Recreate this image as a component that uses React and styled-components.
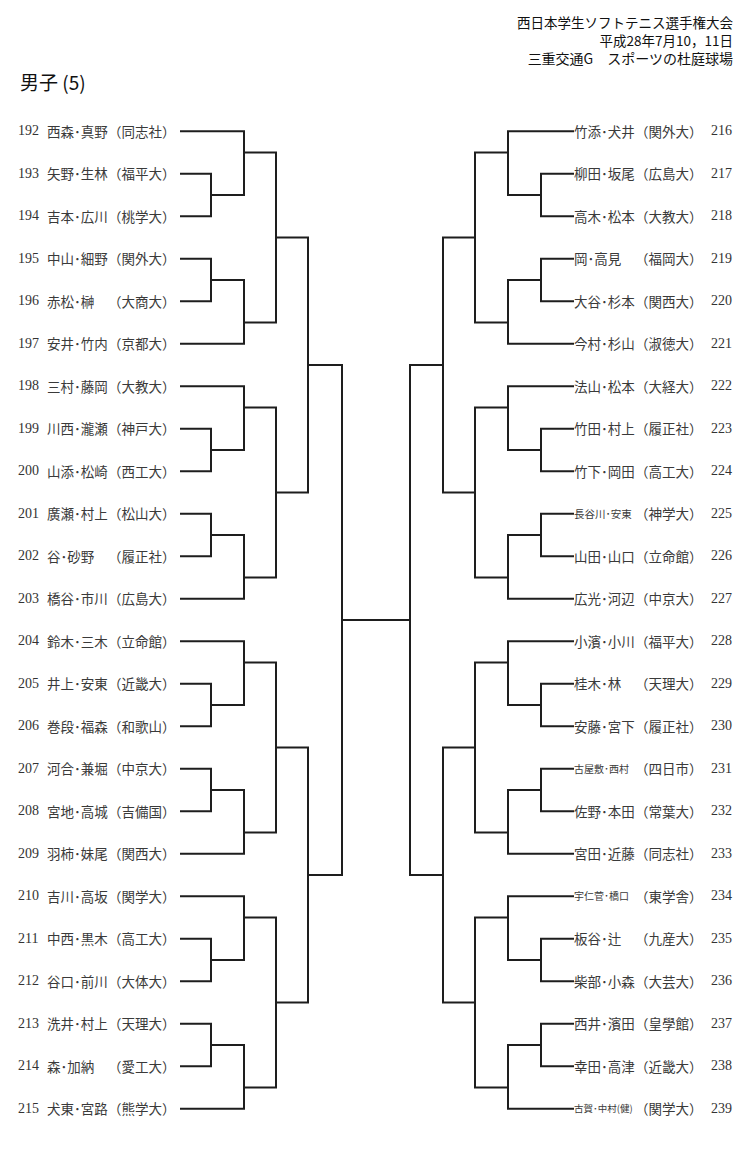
import styled, { createGlobalStyle } from "styled-components";

const ROW = 42.5;
const LEFT_X = [180, 211, 244, 276, 308, 342];
const RIGHT_X = [574, 541, 508, 475, 443, 410];
const CENTER_OFFSET = 180;

const left = [
  ["192", "西森･真野", "（同志社）"],
  ["193", "矢野･生林", "（福平大）"],
  ["194", "吉本･広川", "（桃学大）"],
  ["195", "中山･細野", "（関外大）"],
  ["196", "赤松･榊", "（大商大）"],
  ["197", "安井･竹内", "（京都大）"],
  ["198", "三村･藤岡", "（大教大）"],
  ["199", "川西･瀧瀬", "（神戸大）"],
  ["200", "山添･松崎", "（西工大）"],
  ["201", "廣瀬･村上", "（松山大）"],
  ["202", "谷･砂野", "（履正社）"],
  ["203", "橋谷･市川", "（広島大）"],
  ["204", "鈴木･三木", "（立命館）"],
  ["205", "井上･安東", "（近畿大）"],
  ["206", "巻段･福森", "（和歌山）"],
  ["207", "河合･兼堀", "（中京大）"],
  ["208", "宮地･高城", "（吉備国）"],
  ["209", "羽柿･妹尾", "（関西大）"],
  ["210", "吉川･高坂", "（関学大）"],
  ["211", "中西･黒木", "（高工大）"],
  ["212", "谷口･前川", "（大体大）"],
  ["213", "洗井･村上", "（天理大）"],
  ["214", "森･加納", "（愛工大）"],
  ["215", "犬東･宮路", "（熊学大）"],
];

const right = [
  ["216", "竹添･犬井", "（関外大）"],
  ["217", "柳田･坂尾", "（広島大）"],
  ["218", "高木･松本", "（大教大）"],
  ["219", "岡･高見", "（福岡大）"],
  ["220", "大谷･杉本", "（関西大）"],
  ["221", "今村･杉山", "（淑徳大）"],
  ["222", "法山･松本", "（大経大）"],
  ["223", "竹田･村上", "（履正社）"],
  ["224", "竹下･岡田", "（高工大）"],
  ["225", "長谷川･安東", "（神学大）", 10.5],
  ["226", "山田･山口", "（立命館）"],
  ["227", "広光･河辺", "（中京大）"],
  ["228", "小濱･小川", "（福平大）"],
  ["229", "桂木･林", "（天理大）"],
  ["230", "安藤･宮下", "（履正社）"],
  ["231", "古屋敷･西村", "（四日市）", 10],
  ["232", "佐野･本田", "（常葉大）"],
  ["233", "宮田･近藤", "（同志社）"],
  ["234", "宇仁菅･橋口", "（東学舎）", 10],
  ["235", "板谷･辻", "（九産大）"],
  ["236", "柴部･小森", "（大芸大）"],
  ["237", "西井･濱田", "（皇學館）"],
  ["238", "幸田･高津", "（近畿大）"],
  ["239", "古賀･中村(健)", "（関学大）", 9.5],
];

const y = (i) => ROW / 2 + ROW * i;
const cx = (x) => x - CENTER_OFFSET;
const h = (x1, x2, i) => `M${cx(x1)} ${y(i)}H${cx(x2)}`;
const v = (x, i1, i2) => `M${cx(x)} ${y(i1)}V${y(i2)}`;

// six entries: [a, [b, c]] and [[d, e], f]
function groupPaths(X, b) {
  return [
    h(X[0], X[2], b),
    h(X[0], X[1], b + 1),
    h(X[0], X[1], b + 2),
    v(X[1], b + 1, b + 2),
    h(X[1], X[2], b + 1.5),
    v(X[2], b, b + 1.5),
    h(X[2], X[3], b + 0.5),
    h(X[0], X[1], b + 3),
    h(X[0], X[1], b + 4),
    v(X[1], b + 3, b + 4),
    h(X[1], X[2], b + 3.5),
    h(X[0], X[2], b + 5),
    v(X[2], b + 3.5, b + 5),
    h(X[2], X[3], b + 4.5),
    v(X[3], b + 0.5, b + 4.5),
    h(X[3], X[4], b + 2.5),
  ];
}

function halfPaths(X, b) {
  return [
    ...groupPaths(X, b),
    ...groupPaths(X, b + 6),
    v(X[4], b + 2.5, b + 8.5),
    h(X[4], X[5], b + 5.5),
  ];
}

function sidePaths(X) {
  return [...halfPaths(X, 0), ...halfPaths(X, 12), v(X[5], 5.5, 17.5)];
}

const bracketPath = [
  ...sidePaths(LEFT_X),
  ...sidePaths(RIGHT_X),
  h(LEFT_X[5], RIGHT_X[5], 11.5),
].join("");

function Entry({ side, num, name, school, small }) {
  if (side === "left") {
    return (
      <EntryRow>
        <Num>{num}</Num>
        <Name $size={small}>{name}</Name>
        <School>{school}</School>
      </EntryRow>
    );
  }
  return (
    <EntryRow>
      <Name $size={small}>{name}</Name>
      <School>{school}</School>
      <Num $right>{num}</Num>
    </EntryRow>
  );
}

export default function App() {
  return (
    <>
      <GlobalStyle />
      <Page>
        <Header>
          <div>西日本学生ソフトテニス選手権大会</div>
          <div>平成28年7月10，11日</div>
          <div>三重交通G　スポーツの杜庭球場</div>
        </Header>
        <Title>男子 (5)</Title>
        <Bracket>
          <Column $pad={18}>
            {left.map(([num, name, school, small]) => (
              <Entry key={num} side="left" num={num} name={name} school={school} small={small} />
            ))}
          </Column>
          <Lines viewBox={`0 0 394 ${ROW * 24}`} width="394" height={ROW * 24}>
            <path
              d={bracketPath}
              fill="none"
              stroke="#1e1e1e"
              strokeWidth="2"
              strokeLinecap="square"
            />
          </Lines>
          <Column $pad={0}>
            {right.map(([num, name, school, small]) => (
              <Entry key={num} side="right" num={num} name={name} school={school} small={small} />
            ))}
          </Column>
        </Bracket>
      </Page>
    </>
  );
}

const GlobalStyle = createGlobalStyle`
  body {
    margin: 0;
    background: #fff;
    font-family: "Noto Sans CJK JP", "Noto Sans", sans-serif;
  }
`;

const Page = styled.div`
  width: 750px;
  height: 1164px;
  background: #fff;
  overflow: hidden;
`;

const Header = styled.div`
  padding: 13px 17px 0 0;
  text-align: right;
  font-size: 13.5px;
  line-height: 18px;
  color: #111;
  white-space: nowrap;

  div:last-child {
    font-size: 14px;
  }
`;

const Title = styled.div`
  margin-top: 3px;
  padding-left: 20px;
  font-size: 19px;
  line-height: 24px;
  color: #111;
`;

const Bracket = styled.div`
  display: grid;
  grid-template-columns: 180px 394px 1fr;
  margin-top: 16px;
`;

const Column = styled.div`
  display: flex;
  flex-direction: column;
  padding-left: ${(p) => p.$pad}px;
`;

const EntryRow = styled.div`
  display: flex;
  align-items: center;
  height: ${ROW}px;
  color: #3a3a3a;
  font-size: 13.5px;
  white-space: nowrap;
`;

const Num = styled.span`
  width: 21px;
  margin: ${(p) => (p.$right ? "0 0 0 9px" : "0 8px 0 0")};
  font-family: "Liberation Serif", serif;
  font-size: 14px;
  color: #333;
`;

const Name = styled.span`
  display: inline-block;
  width: 61px;
  font-size: ${(p) => p.$size || 13.5}px;
  line-height: 1;
`;

const School = styled.span`
  display: inline-block;
  width: 67px;
  line-height: 1;
`;

const Lines = styled.svg`
  display: block;
`;
